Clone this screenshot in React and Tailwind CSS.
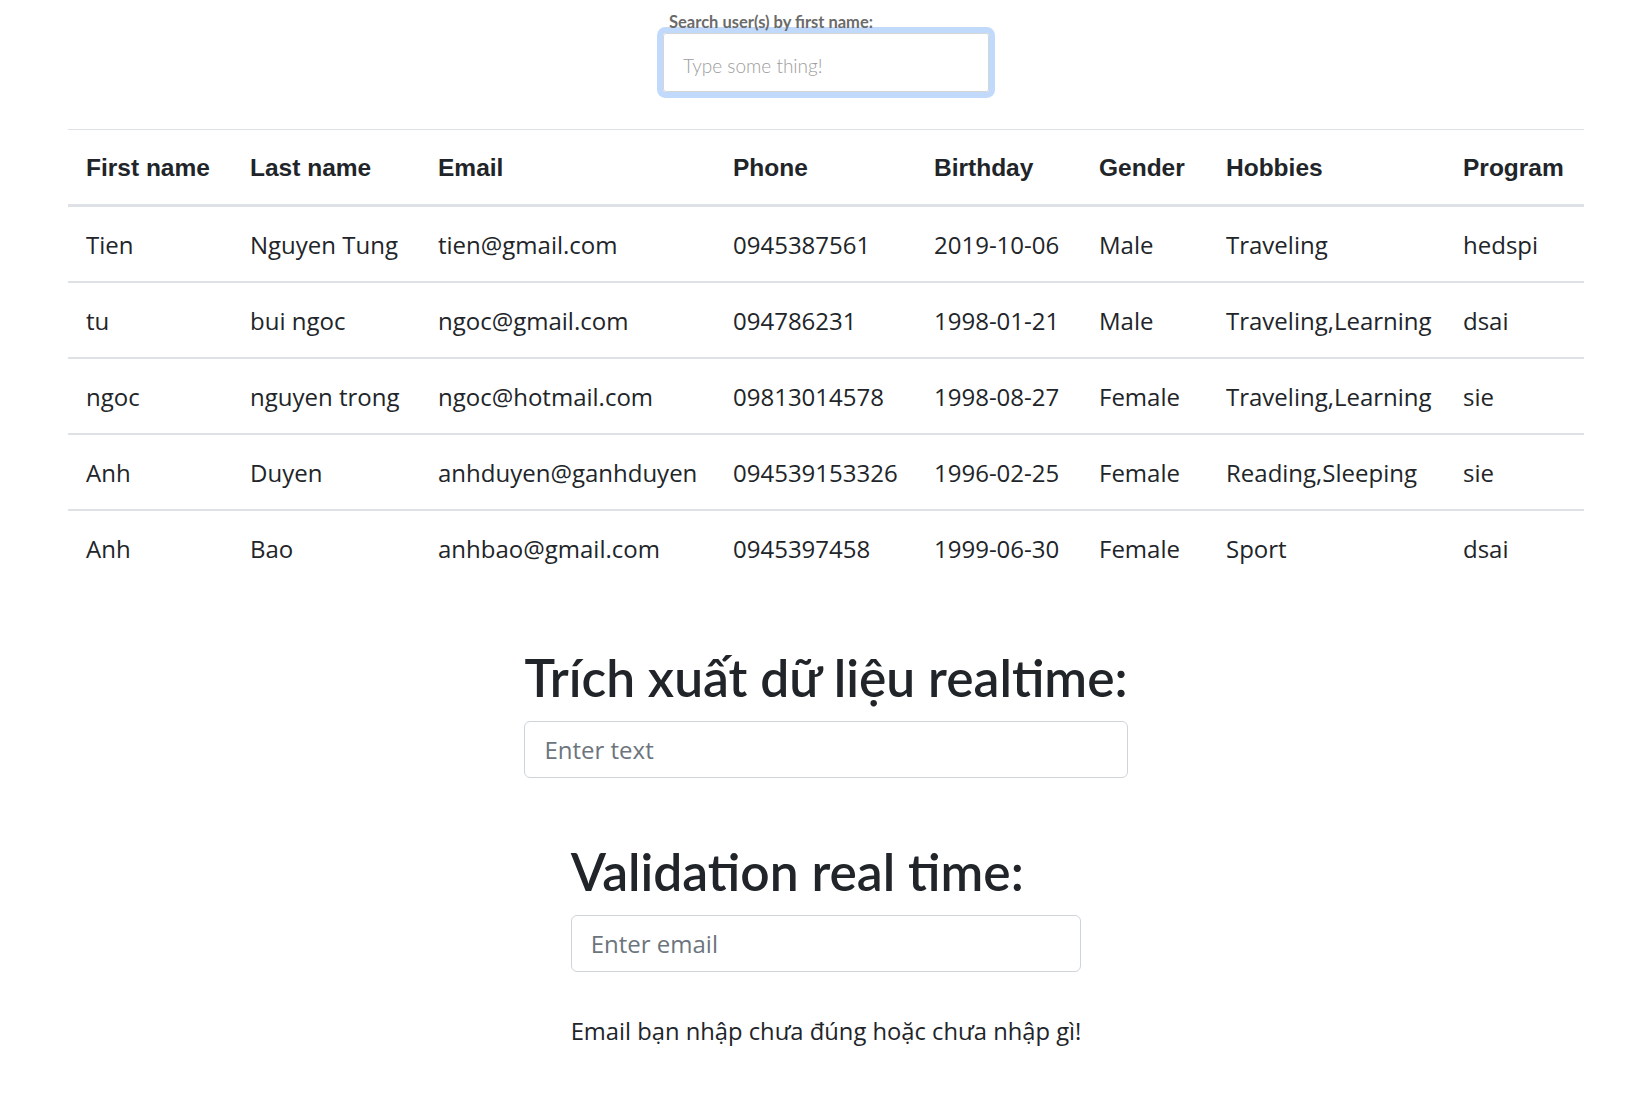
import { useState } from "react";

const users = [
    { first: "Tien", last: "Nguyen Tung", email: "tien@gmail.com", phone: "0945387561", birthday: "2019-10-06", gender: "Male", hobbies: "Traveling", program: "hedspi" },
    { first: "tu", last: "bui ngoc", email: "ngoc@gmail.com", phone: "094786231", birthday: "1998-01-21", gender: "Male", hobbies: "Traveling,Learning", program: "dsai" },
    { first: "ngoc", last: "nguyen trong", email: "ngoc@hotmail.com", phone: "09813014578", birthday: "1998-08-27", gender: "Female", hobbies: "Traveling,Learning", program: "sie" },
    { first: "Anh", last: "Duyen", email: "anhduyen@ganhduyen", phone: "094539153326", birthday: "1996-02-25", gender: "Female", hobbies: "Reading,Sleeping", program: "sie" },
    { first: "Anh", last: "Bao", email: "anhbao@gmail.com", phone: "0945397458", birthday: "1999-06-30", gender: "Female", hobbies: "Sport", program: "dsai" },
];

const columns = [
    { key: "first", label: "First name", width: "w-[164px]" },
    { key: "last", label: "Last name", width: "w-[188px]" },
    { key: "email", label: "Email", width: "w-[295px]" },
    { key: "phone", label: "Phone", width: "w-[201px]" },
    { key: "birthday", label: "Birthday", width: "w-[165px]" },
    { key: "gender", label: "Gender", width: "w-[127px]" },
    { key: "hobbies", label: "Hobbies", width: "w-[237px]" },
    { key: "program", label: "Program", width: "w-[139px]" },
];

function App() {
    const [search, setSearch] = useState("");
    const [text, setText] = useState("");
    const [email, setEmail] = useState("");

    const filteredUsers = search
        ? users.filter((user) => user.first.toLowerCase().includes(search.toLowerCase()))
        : users;

    const emailValid = /^[^\s@]+@[^\s@]+\.[^\s@]+$/.test(email);

    return (
        <div className="min-h-screen bg-white pl-[9px] font-['Open_Sans',sans-serif] text-[#212529]">
            <div className="flex justify-center pt-[12px]">
                <div className="w-[326px]">
                    <label className="block pl-[6px] font-['Lato',sans-serif] text-[16.5px] leading-[21px] font-bold text-[#6b6b6b]">
                        Search user(s) by first name:
                    </label>
                    <input
                        className="block w-full h-[59px] rounded-[3px] border border-[#d5d5d5] ring-[6px] ring-[#c1dafc] px-[19px] pt-[6px] font-['Lato',sans-serif] text-[19px] font-light outline-none placeholder:text-[#9d9d9d]"
                        placeholder="Type some thing!"
                        value={search}
                        onChange={(e) => setSearch(e.target.value)}
                    />
                </div>
            </div>

            <div className="mx-[59px] mt-[37px]">
                <table className="w-full table-fixed border-collapse text-left">
                    <colgroup>
                        {columns.map((col) => (
                            <col key={col.key} className={col.width} />
                        ))}
                    </colgroup>
                    <thead>
                        <tr>
                            {columns.map((col) => (
                                <th
                                    key={col.key}
                                    className="border-t border-b-[3px] border-[#dee2e6] px-[18px] pt-[20px] pb-[18px] text-[24.5px] leading-[36px] font-bold font-['Liberation_Sans',Arial,sans-serif] whitespace-nowrap"
                                >
                                    {col.label}
                                </th>
                            ))}
                        </tr>
                    </thead>
                    <tbody>
                        {filteredUsers.map((user, i) => (
                            <tr key={i}>
                                {columns.map((col) => (
                                    <td
                                        key={col.key}
                                        className="border-t-2 border-[#dee2e6] px-[18px] pt-[20px] pb-[18px] text-[24px] leading-[36px] whitespace-nowrap"
                                    >
                                        {user[col.key]}
                                    </td>
                                ))}
                            </tr>
                        ))}
                    </tbody>
                </table>
            </div>

            <div className="flex justify-center mt-[61px]">
                <div className="inline-block">
                    <h1 className="font-['Lato',sans-serif] text-[51.5px] leading-[62px] font-semibold">Trích xuất dữ liệu realtime:</h1>
                    <input
                        className="mt-[13px] block w-full h-[57px] rounded-[6px] border-[1.5px] border-[#ced4da] px-[19px] text-[24px] outline-none placeholder:text-[#6c757d]"
                        placeholder="Enter text"
                        value={text}
                        onChange={(e) => setText(e.target.value)}
                    />
                </div>
            </div>

            <div className="flex justify-center mt-[62px]">
                <div className="inline-block">
                    <h1 className="font-['Lato',sans-serif] text-[51.5px] leading-[62px] font-semibold">Validation real time:</h1>
                    <input
                        className="mt-[13px] block w-full h-[57px] rounded-[6px] border-[1.5px] border-[#ced4da] px-[19px] text-[24px] outline-none placeholder:text-[#6c757d]"
                        placeholder="Enter email"
                        value={email}
                        onChange={(e) => setEmail(e.target.value)}
                    />
                    {!emailValid && (
                        <p className="mt-[41px] text-[23.75px] leading-[36px]">Email bạn nhập chưa đúng hoặc chưa nhập gì!</p>
                    )}
                </div>
            </div>
        </div>
    );
}

export default App;
